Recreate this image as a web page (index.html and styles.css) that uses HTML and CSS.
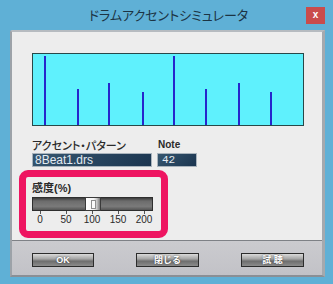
FILE: index.html
```html
<!DOCTYPE html>
<html lang="ja">
<head>
  <meta charset="UTF-8" />
  <title>ドラムアクセントシミュレータ</title>
  <link rel="stylesheet" href="styles.css">
</head>
<body>

  <div class="window">
    <div class="titlebar">
      <span class="title">ドラムアクセントシミュレータ</span>
      <span class="close">x</span>
    </div>

    <div class="dialog">
      <div class="content">
        <div class="chart">
          <svg width="270" height="71" viewBox="0 0 270 71">
            <rect x="11" y="2" width="2" height="69" fill="#2626cc"/>
            <rect x="44" y="35" width="2" height="36" fill="#2626cc"/>
            <rect x="75" y="29" width="2" height="42" fill="#2626cc"/>
            <rect x="109" y="38" width="2" height="33" fill="#2626cc"/>
            <rect x="140" y="2" width="2" height="69" fill="#2626cc"/>
            <rect x="172" y="35" width="2" height="36" fill="#2626cc"/>
            <rect x="205" y="29" width="2" height="42" fill="#2626cc"/>
            <rect x="237" y="38" width="2" height="33" fill="#2626cc"/>
          </svg>
        </div>

        <div class="fields">
          <div class="field field-pattern">
            <div class="label">アクセント・パターン</div>
            <div class="box">8Beat1.drs</div>
          </div>
          <div class="field field-note">
            <div class="label label-note">Note</div>
            <div class="box box-note">42</div>
          </div>
        </div>

        <div class="sens">
          <div class="sens-label">感度(%)</div>
          <div class="track">
            <div class="thumb"><span class="grip"></span></div>
          </div>
          <div class="scale">
            <div class="step"><span class="tick"></span><span>0</span></div>
            <div class="step"><span class="tick"></span><span>50</span></div>
            <div class="step"><span class="tick"></span><span>100</span></div>
            <div class="step"><span class="tick"></span><span>150</span></div>
            <div class="step"><span class="tick"></span><span>200</span></div>
          </div>
        </div>
      </div>

      <div class="footer">
        <button class="botao botao-ok">OK</button>
        <button class="botao">閉じる</button>
        <button class="botao">試 聴</button>
      </div>
    </div>
  </div>

</body>
</html>
```

FILE: styles.css
```css
* {
  box-sizing: border-box;
  font-family: "Liberation Sans", "Noto Sans CJK JP", sans-serif;
}

body {
  margin: 0;
  background-color: #5fb0d6;
}

.window {
  width: 333px;
  height: 284px;
}

.titlebar {
  height: 30px;
  display: flex;
  align-items: flex-start;
}

.title {
  flex: 1;
  padding-left: 31px;
  text-align: center;
  line-height: 30px;
  font-family: "Noto Sans CJK JP", sans-serif;
  font-size: 13px;
  font-feature-settings: "palt";
  color: #1c3444;
}

.close {
  width: 19px;
  height: 17px;
  margin-top: 7px;
  margin-right: 8px;
  background: #c94c4c;
  color: #fff;
  font-size: 10px;
  font-weight: bold;
  line-height: 16px;
  text-align: center;
}

.dialog {
  width: 315px;
  margin-left: 10px;
  border-top: 2px solid #b6bbc0;
  border-left: 2px solid #9ca2a8;
  border-right: 3px solid #a4a9ae;
  border-bottom: 2px solid #8a8f95;
  border-top-left-radius: 2px;
}

.content {
  height: 209px;
  padding: 21px 0 0 20px;
  background: #ededed;
  border-bottom: 1px solid #7e8186;
}

.chart {
  width: 272px;
  height: 73px;
  background: #5ff1fd;
  border: 1px solid #284848;
}

.chart svg {
  display: block;
}

.fields {
  display: flex;
  gap: 5px;
  margin-top: 12px;
}

.field-pattern {
  width: 120px;
}

.field-note {
  width: 40px;
}

.label {
  line-height: 14px;
  font-family: "Noto Sans CJK JP", sans-serif;
  font-size: 11px;
  font-weight: 500;
  font-feature-settings: "palt";
  color: #2a2a2a;
}

.label-note {
  padding-left: 1px;
  font-family: "Liberation Sans", sans-serif;
  font-size: 10px;
  font-weight: bold;
}

.box {
  height: 14px;
  margin-top: 1px;
  padding-left: 2px;
  border: 1px solid #a9b3bc;
  background: linear-gradient(135deg, #36566f, #1b3550);
  color: #e4ebf2;
  font-size: 12px;
  line-height: 12px;
}

.box-note {
  padding-left: 4px;
  font-family: "Liberation Mono", monospace;
  font-size: 11px;
}

.sens {
  width: 149px;
  height: 68px;
  margin-top: 3px;
  margin-left: -13px;
  padding: 4px 8px 0 6px;
  border: 7px solid #ee1561;
  border-radius: 9px;
}

.sens-label {
  line-height: 14px;
  font-size: 11px;
  font-weight: bold;
  color: #2a2a2a;
}

.track {
  position: relative;
  width: 121px;
  height: 14px;
  margin-top: 2px;
  border: 1px solid #2e2e2e;
  background: linear-gradient(#3c3c3c, #6c6c6c 25%, #7a7a7a 70%, #555);
}

.thumb {
  position: absolute;
  left: 52px;
  top: -1px;
  width: 16px;
  height: 14px;
  border: 1px solid #3a3a3a;
  background-color: #f4f4f4;
  background-image: linear-gradient(90deg, #ffffff, #f4f4f4 55%, #c4c4c4 78%, #7a7a7a);
  display: flex;
  align-items: center;
  justify-content: center;
}

.grip {
  width: 5px;
  height: 9px;
  border: 1px solid #8e8e8e;
  background: #fafafa;
}

.scale {
  display: grid;
  grid-template-columns: repeat(5, 26px);
  margin-left: -5px;
}

.step {
  display: flex;
  flex-direction: column;
  align-items: center;
  font-size: 10px;
  line-height: 11px;
  color: #2a2a2a;
}

.tick {
  width: 1px;
  height: 3px;
  background: #555;
}

.footer {
  height: 34px;
  padding: 12px 0 0 20px;
  display: flex;
  gap: 42px;
  align-items: flex-start;
  background: linear-gradient(#cbcbcf, #c2c2c7);
}

.botao {
  width: 63px;
  height: 14px;
  padding: 0;
  border: 1px solid #2c2c2c;
  background: linear-gradient(#dadada, #a6a6a6 40%, #6e6e6e 60%, #8c8c8c);
  color: #fff;
  font-family: "Liberation Sans", "Noto Sans CJK JP", sans-serif;
  font-size: 9px;
  font-weight: bold;
  line-height: 12px;
  text-shadow: 0 0 2px #333;
}

.botao-ok {
  width: 62px;
}
```
